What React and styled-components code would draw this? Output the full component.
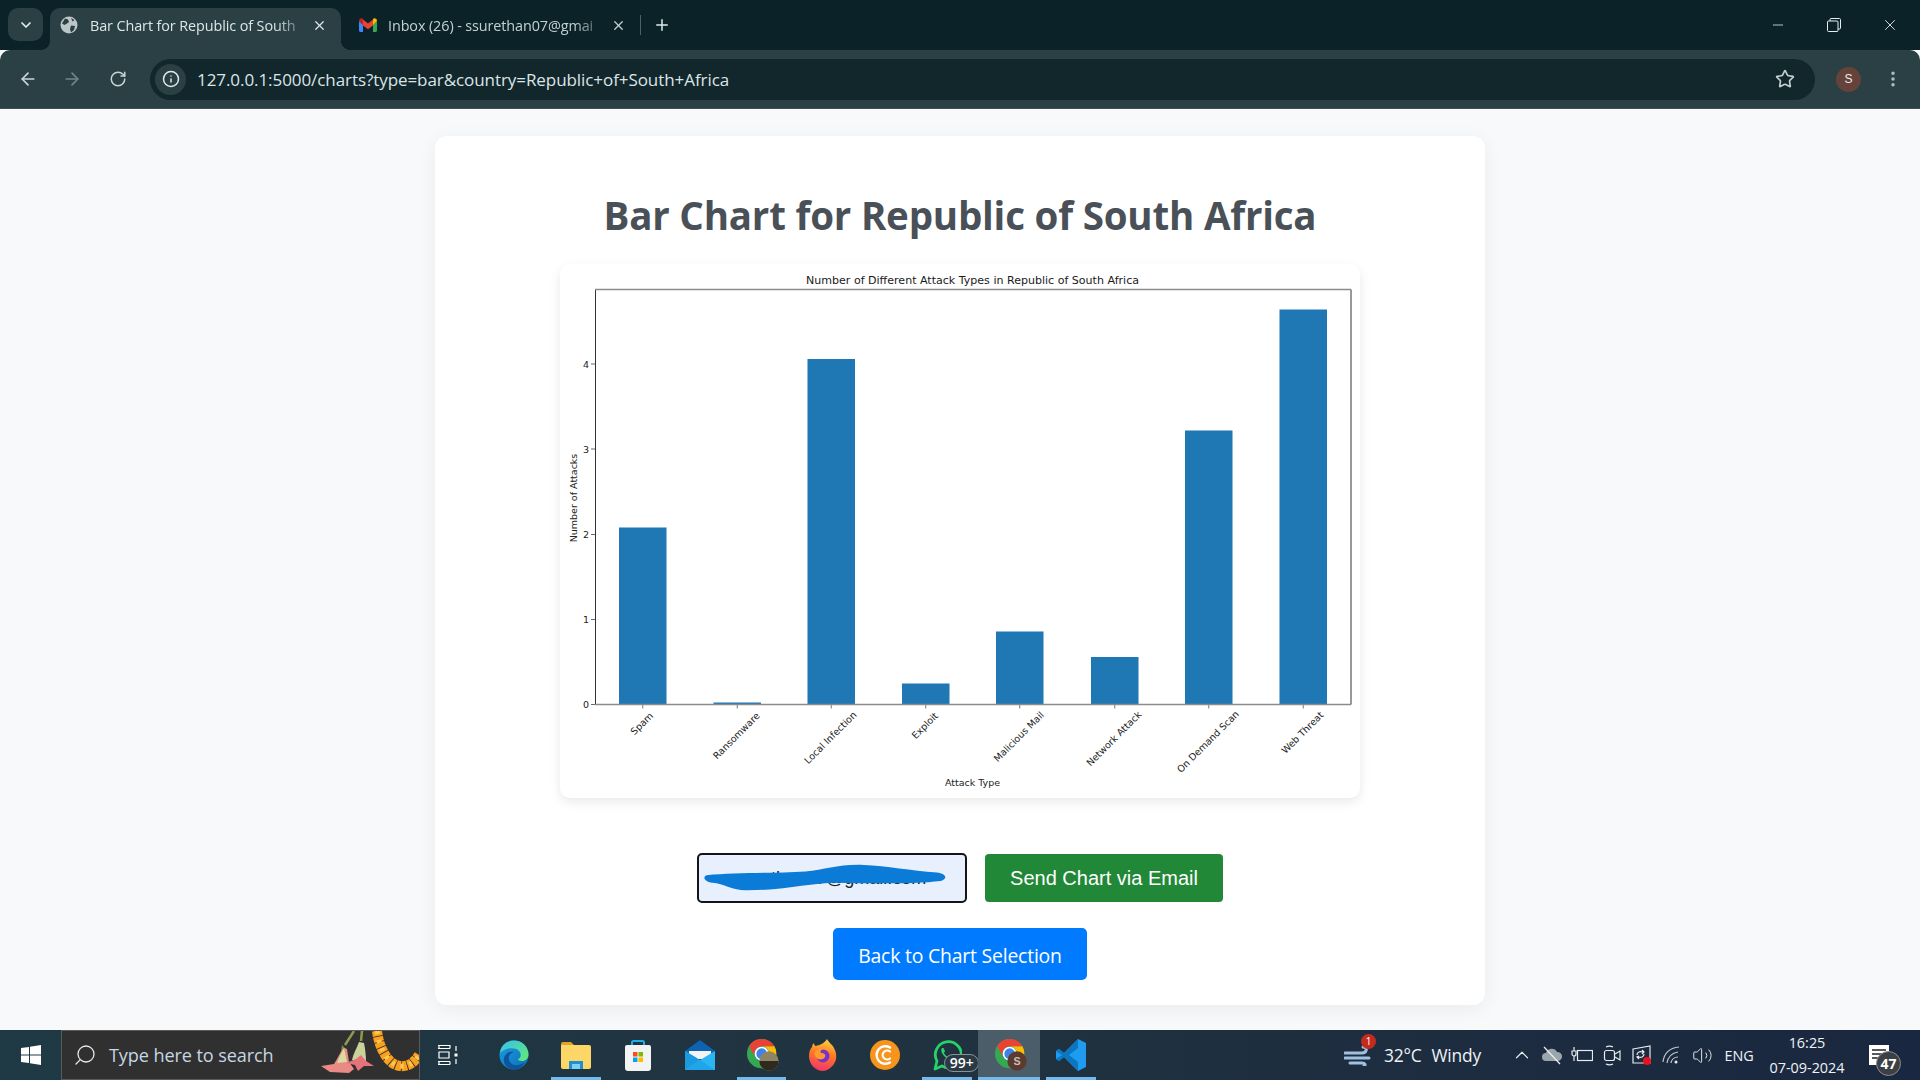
import React from "react";
import styled, { createGlobalStyle } from "styled-components";
import { ArrowLeft, ArrowRight, RotateCw, Info, Star, EllipsisVertical, ChevronDown, ChevronUp, X, Plus, Minus, Search, Volume2 } from "lucide-react";

const Global = createGlobalStyle`
  html, body { margin: 0; padding: 0; height: 100%; overflow: hidden; background: #f8f9fa; }
  * { box-sizing: border-box; }
  #root { height: 100%; }
`;
const UI = `"Open Sans", "Noto Sans", sans-serif`;

const Shell = styled.div`
  width: 1920px; height: 1080px; display: flex; flex-direction: column; font-family: ${UI};
`;
const TabStrip = styled.div`
  height: 50px; background: #0b2328; display: flex; align-items: flex-end; padding-left: 8px; flex-shrink: 0;
`;
const TabMenu = styled.div`
  width: 35px; height: 33px; margin-bottom: 9px; border-radius: 10px; background: #2a4044; color: #e6eeee;
  display: flex; align-items: center; justify-content: center;
`;
const Tab = styled.div`
  position: relative; width: ${p => p.$w}px; height: 42px; margin-left: ${p => p.$ml || 0}px; display: flex; align-items: center;
  padding: 0 10px 8px ${p => p.$pl}px; border-radius: 10px 10px 0 0;
  background: ${p => (p.$active ? "#2a4044" : "transparent")};
  color: ${p => (p.$active ? "#dde6e7" : "#c3d0d2")};
  ${p => p.$active && `
    &::before, &::after { content: ""; position: absolute; bottom: 0; width: 10px; height: 10px; }
    &::before { left: -10px; background: radial-gradient(circle at 0 0, transparent 10px, #2a4044 10.5px); }
    &::after { right: -10px; background: radial-gradient(circle at 100% 0, transparent 10px, #2a4044 10.5px); }
  `}
`;
const TabTitle = styled.span`
  flex: 1; margin-left: ${p => p.$ml}px; white-space: nowrap; font-size: 14.4px; letter-spacing: -0.1px;
  -webkit-mask-image: linear-gradient(90deg, #000 84%, rgba(0,0,0,.2) 97%);
  mask-image: linear-gradient(90deg, #000 84%, rgba(0,0,0,.2) 97%);
`;
const TabClose = styled.span`
  display: flex; width: 18px; justify-content: center; flex-shrink: 0; margin-right: ${p => p.$mr || 0}px;
`;
const TabSep = styled.div`width: 1px; height: 20px; background: #4b6266; margin: 0 0 15px 0;`;
const NewTab = styled.div`color: #dfe8e8; display: flex; margin: 0 0 16px 12px;`;
const WindowControls = styled.div`margin-left: auto; height: 100%; display: flex; align-items: center; padding-right: 2px; color: #e8eeee;`;
const WinBtn = styled.div`width: 56px; display: flex; justify-content: center;`;

const Toolbar = styled.div`
  height: 59px; background: #2a4044; display: flex; align-items: center; padding-left: 6px; flex-shrink: 0;
  border-radius: 10px 10px 0 0; border-bottom: 1px solid #3c4f52;
`;
const NavBtn = styled.div`
  width: ${p => p.$w || 44}px; margin-left: ${p => p.$ml || 0}px; display: flex; justify-content: center;
  color: ${p => (p.$dim ? "#70868a" : "#c7d5d7")};
`;
const Omnibox = styled.div`
  width: 1665px; height: 41px; margin-left: 10px; border-radius: 21px; background: #12272c;
  display: flex; align-items: center; padding: 0 20px 0 5px;
`;
const InfoPill = styled.div`
  width: 31px; height: 31px; border-radius: 50%; background: #2a4044; color: #e2eaeb;
  display: flex; align-items: center; justify-content: center;
`;
const Url = styled.div`
  margin-left: 11px; font-size: 17px; letter-spacing: -0.07px; color: #dbe5e6; flex: 1; white-space: nowrap;
`;
const Avatar = styled.div`
  width: 25px; height: 25px; margin-left: 21px; border-radius: 50%; background: #65433a; color: #efe6e2;
  font: 12px "Liberation Sans", sans-serif; display: flex; align-items: center; justify-content: center;
`;
const MenuBtn = styled.div`margin-left: 22px; color: #a9c0c3; display: flex;`;

const Main = styled.main`
  flex: 1; display: flex; justify-content: center; padding-top: 27px; background: #f8f9fa; min-height: 0;
`;
const Card = styled.section`
  width: 1050px; height: 869px; background: #fff; border-radius: 12px; box-shadow: 0 4px 20px rgba(0,0,0,.06);
  display: flex; flex-direction: column; align-items: center; padding: 43px 0 25px;
`;
const Title = styled.h1`
  margin: 0; height: 86px; font: 700 38.5px/72px "Open Sans", sans-serif; letter-spacing: -0.2px; color: #495057; white-space: nowrap;
`;
const ChartCard = styled.div`
  width: 800px; height: 534px; border-radius: 10px; background: #fff; box-shadow: 0 4px 12px rgba(0,0,0,.09); overflow: hidden; flex-shrink: 0;
`;
const ChartSvg = styled.svg`display: block; font-family: "DejaVu Sans", sans-serif;`;
const EmailRow = styled.form`display: flex; gap: 18px; margin-top: 55px; align-items: center;`;
const EmailBox = styled.div`
  position: relative; width: 270px; height: 50px; border: 2px solid #14141c; border-radius: 5px; background: #e8f0fe;
  display: flex; align-items: center; padding-left: 28px; font: 18px "Liberation Sans", sans-serif; color: #222; overflow: hidden;
`;
const Scribble = styled.svg`position: absolute; left: 2px; top: 5px;`;
const SendBtn = styled.button`
  width: 238px; height: 48px; border: 0; border-radius: 4px; background: #218838; color: #fff;
  font: 20px "Liberation Sans", sans-serif;
`;
const BackBtn = styled.a`
  width: 254px; height: 52px; margin-top: 25px; padding-top: 2px; border-radius: 5px; background: #007bff; color: #fff;
  font: 19.4px "Open Sans", sans-serif; letter-spacing: -0.2px; display: flex; align-items: center; justify-content: center; flex-shrink: 0;
`;

const Taskbar = styled.footer`
  height: 50px; flex-shrink: 0; display: flex; align-items: stretch; color: #eef3f5;
  background: linear-gradient(90deg, #1f3a45, #20323f 50%, #1a2740);
`;
const Start = styled.div`width: 61px; display: flex; align-items: center; justify-content: center;`;
const SearchBox = styled.div`
  width: 359px; background: #303030; border: 1px solid #5a5a5a; display: flex; align-items: center; padding-left: 11px;
  color: #c6d6e2; position: relative; overflow: hidden;
`;
const SearchText = styled.span`margin-left: 12px; font-size: 18.1px; letter-spacing: -0.1px;`;
const Garland = styled.svg`position: absolute; right: 0; top: 0;`;
const Slot = styled.div`
  position: relative; width: ${p => p.$w || 61.9}px; padding-right: ${p => p.$pr || 0}px; display: flex; align-items: center; justify-content: center; flex-shrink: 0;
  background: ${p => (p.$active ? "#4b5d69" : "transparent")};
  ${p => p.$open && `
    &::after { content: ""; position: absolute; bottom: 0; height: 3px; left: ${p.$active ? 0 : 6}px; right: ${p.$active ? 0 : 6}px; background: #76b9ed; }
  `}
`;
const ChromeWrap = styled.div`display: flex; margin-left: 3px;`;
const Tray = styled.div`margin-left: auto; width: 580px; display: flex; align-items: center;`;
const WeatherGroup = styled.div`width: 167px; display: flex; align-items: center; padding-left: 4px; font-size: 17.4px; letter-spacing: -0.2px;`;
const WeatherIconWrap = styled.div`position: relative; width: 40px; display: flex;`;
const AlertDot = styled.span`
  position: absolute; left: 17px; top: -10px; width: 15px; height: 15px; border-radius: 50%; background: #c42b1c; font-size: 10px; line-height: 15px; text-align: center; color: #fff;
`;
const WindyLabel = styled.span`margin-left: 10px;`;
const TrayIcon = styled.div`width: 30px; display: flex; justify-content: center; color: #e6ecef;`;
const Lang = styled.div`width: 44px; font-size: 14.4px; letter-spacing: -0.1px; text-align: center;`;
const Clock = styled.div`width: 92px; text-align: center; font-size: 14.4px; line-height: 25px;`;
const Notify = styled.div`position: relative; margin-left: 16px; display: flex;`;
const NotifyBadge = styled.span`
  position: absolute; left: 7px; top: 6px; width: 25px; height: 25px; border-radius: 50%; background: #3c3f44; border: 1px solid #8a8d90;
  font-size: 14px; font-weight: 700; line-height: 23px; text-align: center; color: #fff;
`;
const CountBadge = styled.span`
  position: absolute; left: 28px; top: 24px; width: 35px; height: 18px; border-radius: 9px; background: #2a3a45; border: 1px solid #8a9299;
  font-size: 14px; font-weight: 600; line-height: 15px; text-align: center; color: #fff;
`;

/* ---- drawings ---- */
const GlobeFav = () => (
  <svg width="18" height="18" viewBox="0 0 18 18">
    <circle cx="9" cy="9" r="8.5" fill="#bcc6c8" />
    <path d="M5 2.5l3 1 1 2.5-2 1.5L4.5 9 2 7.5zM11 9.5l4 .5-1 4-3 2.5-1-3.5zM11 2l3.5 2-2 1.5z" fill="#2a4044" />
  </svg>
);
const GmailFav = () => (
  <svg width="18" height="14" viewBox="0 0 18 14">
    <path d="M0 3v9.6C0 13.4.6 14 1.4 14H4V6.5z" fill="#4285F4" />
    <path d="M18 3v9.6c0 .8-.6 1.4-1.4 1.4H14V6.5z" fill="#34A853" />
    <path d="M4 7.5V1.5L9 5.4 14 1.5v6L9 11.2z" fill="#EA4335" />
    <path d="M0 3c0-2.3 2.6-3.6 4-2v6z" fill="#C5221F" />
    <path d="M14 1c1.4-1.6 4-.3 4 2l-4 4z" fill="#FBBC04" />
  </svg>
);
const RestoreIcon = () => (
  <svg width="14" height="14" viewBox="0 0 14 14" fill="none" stroke="currentColor" strokeWidth="1">
    <rect x="0.5" y="3" width="10.5" height="10.5" rx="1" />
    <path d="M3 3V1.5C3 1 3.4.5 4 .5h8.5c.5 0 1 .5 1 1V10c0 .6-.5 1-1 1H11" />
  </svg>
);
const WinLogo = () => (
  <svg width="20" height="20" viewBox="0 0 20 20" fill="#fff">
    <path d="M0 3l8-1.1V9.4H0zM9 1.7L20 0v9.4H9zM0 10.4h8v7.7L0 17zM9 10.4h11V20L9 18.3z" />
  </svg>
);
const TaskView = () => (
  <svg width="20" height="20" viewBox="0 0 20 20" fill="none" stroke="#fff" strokeWidth="1.2">
    <path d="M0 .5h12v3M0 3.5h12M1 7h10v6H1zM0 16.5h12M0 19.5h12M12 16.500v3M1 .5v3M1 16.500v3" />
    <path d="M18 1v5M18 14v5" />
    <rect x="16.500" y="8.500" width="3" height="3" fill="#fff" stroke="none" />
  </svg>
);
const Edge = () => (
  <svg width="30" height="30" viewBox="0 0 30 30">
    <defs>
      <linearGradient id="e1" x1="0" y1="1" x2="1" y2="0"><stop offset="0" stopColor="#0c59a4" /><stop offset="1" stopColor="#114a8b" /></linearGradient>
      <linearGradient id="e2" x1="0" y1="0" x2="1" y2="1"><stop offset="0" stopColor="#1b9de2" /><stop offset="1" stopColor="#0d6fb8" /></linearGradient>
      <linearGradient id="e3" x1="0" y1="0" x2="1" y2="1"><stop offset="0" stopColor="#35c1f1" /><stop offset="1" stopColor="#66eb6e" /></linearGradient>
    </defs>
    <circle cx="15" cy="15" r="14.500" fill="url(#e2)" />
    <path d="M1 13C2 5 8 .5 15 .5c8 0 14.500 6 14.500 14 0 4-3 6.500-6.500 6.500-2.500 0-4-1-4-2 3-1 3.500-5 1.500-7.500C17 7 7 7 1 13z" fill="url(#e3)" />
    <path d="M12 29c-5-1.500-8-6-7-11 1-4 5-7 10-6-4 1-6 4-5 8 1 3 4 6 9 5 3-.5 5-1.500 7-3-3 6-8 8.500-14 7z" fill="url(#e1)" />
  </svg>
);
const Folder = () => (
  <svg width="30" height="27" viewBox="0 0 30 27">
    <path d="M0 2a2 2 0 0 1 2-2h8l3 3H0z" fill="#e0a42a" />
    <path d="M0 3h28a2 2 0 0 1 2 2v20a2 2 0 0 1-2 2H2a2 2 0 0 1-2-2z" fill="#fcd768" />
    <path d="M8 19v8h3v-5h8v5h3v-8z" fill="#1f8fd8" />
    <rect x="11" y="22" width="8" height="5" fill="#7ed0f5" />
  </svg>
);
const Store = () => (
  <svg width="26" height="31" viewBox="0 0 26 31">
    <path d="M7 6V2.500C7 1.500 7.500 1 8.500 1h9c1 0 1.500.5 1.500 1.500V6" fill="none" stroke="#1db0e6" strokeWidth="2" />
    <path d="M0 7a2 2 0 0 1 2-2h22a2 2 0 0 1 2 2v21a3 3 0 0 1-3 3H3a3 3 0 0 1-3-3z" fill="#f3f3f3" />
    <rect x="8" y="12" width="4.500" height="4.500" fill="#f25022" />
    <rect x="13.500" y="12" width="4.500" height="4.500" fill="#7fba00" />
    <rect x="8" y="17.500" width="4.500" height="4.500" fill="#00a4ef" />
    <rect x="13.500" y="17.500" width="4.500" height="4.500" fill="#ffb900" />
  </svg>
);
const Mail = () => (
  <svg width="30" height="30" viewBox="0 0 30 30">
    <path d="M0 11L15 0l15 11v3H0z" fill="#0f62b0" />
    <path d="M4 11h22v8H4z" fill="#f2f4f6" />
    <path d="M0 11l15 9 15-9v19H0z" fill="#29b6f2" />
    <path d="M0 30V11l15 9z" fill="#1c9ae0" />
    <path d="M0 30l15-10 15 10z" fill="#20a6e8" />
  </svg>
);
const Chrome = ({ children }) => (
  <ChromeWrap>
    <svg width="32" height="32" viewBox="0 0 48 48">
      <circle cx="22" cy="22" r="22" fill="#34A853" />
      <path d="M41.050 11A22 22 0 0 1 22 44l9.500-16.500A11 11 0 0 0 22 11z" fill="#FBBC04" />
      <path d="M22 0a22 22 0 0 1 19.050 11H22a11 11 0 0 0-9.500 16.500L3 11A22 22 0 0 1 22 0z" fill="#EA4335" />
      <circle cx="22" cy="22" r="10.500" fill="#fff" />
      <circle cx="22" cy="22" r="8" fill="#3f83ea" />
      {children}
    </svg>
  </ChromeWrap>
);
const Firefox = () => (
  <svg width="28" height="32" viewBox="0 0 28 32">
    <defs>
      <linearGradient id="ff" x1="0.6" y1="0" x2="0.4" y2="1"><stop offset="0" stopColor="#ffd23c" /><stop offset=".45" stopColor="#ff7a24" /><stop offset="1" stopColor="#f0356a" /></linearGradient>
    </defs>
    <path d="M18 0c1 3 5 5 7 9 3 6 3 11 0 16-3 4-7 7-11 7-8 0-14-7-14-15 0-4 1-7 3-9 0-2 1-3 2-4 0 2 1 3 2 3 3-1 8-2 11-7z" fill="url(#ff)" />
    <circle cx="14" cy="17" r="6.500" fill="#7a30c9" />
    <path d="M6 13c2-4 8-4 10-3-4 0-5 2-4 4 3 0 5 1 4 4-1 2-4 3-7 2-3-2-4-4-3-7z" fill="#ff9a2e" />
  </svg>
);
const CCleaner = () => (
  <svg width="30" height="30" viewBox="0 0 30 30">
    <circle cx="15" cy="15" r="15" fill="#f7941d" />
    <path d="M20 7.500a8.800 8.800 0 1 0 0 15" fill="none" stroke="#fff" strokeWidth="2.400" strokeLinecap="round" />
    <path d="M20 11.500a4.500 4.500 0 1 0 0 7" fill="none" stroke="#fff" strokeWidth="2.200" strokeLinecap="round" />
  </svg>
);
const WhatsApp = () => (
  <svg width="30" height="32" viewBox="0 0 30 32" fill="none">
    <path d="M3 30l2-8a13 13 0 1 1 5 5z" stroke="#25d366" strokeWidth="2.800" strokeLinejoin="round" />
    <path d="M10 9c-1 1-1 3 0 5 1.500 3 4 5 6 6 2 .7 4 0 4-2l-3-2-1.500 1.500c-1.500-.5-3-2.200-3.500-3.500L13 12l-1.500-3z" fill="#25d366" />
  </svg>
);
const VSCode = () => (
  <svg width="30" height="32" viewBox="0 0 30 32">
    <path d="M22 0l8 4v24l-8 4L8 18l-5 4-3-2v-8l3-2 5 4z" fill="#1f9cf0" />
    <path d="M22 0L8 14l-5-4-3 2 6 4-6 4 3 2 5-4 14 14V23l-9-7 9-7z" fill="#0b77c2" />
  </svg>
);
const TrayGlyph = ({ children, w = 22, h = 22 }) => (
  <svg width={w} height={h} viewBox={`0 0 ${w} ${h}`} fill="none" stroke="currentColor" strokeWidth="1.200">{children}</svg>
);

const bars = [
  { x: 619, top: 528, label: "Spam", cy: 724 },
  { x: 713.5, top: 703, label: "Ransomware", cy: 736 },
  { x: 807.5, top: 359.500, label: "Local Infection", cy: 738 },
  { x: 902, top: 684, label: "Exploit", cy: 726 },
  { x: 996, top: 632, label: "Malicious Mail", cy: 737 },
  { x: 1091, top: 657.5, label: "Network Attack", cy: 739 },
  { x: 1185, top: 431, label: "On Demand Scan", cy: 742 },
  { x: 1279.5, top: 310, label: "Web Threat", cy: 733 },
];
const yTicks = [[0, 705], [1, 620], [2, 535], [3, 449.500], [4, 364.500]];

const Chart = () => (
  <ChartSvg width="800" height="534" viewBox="560 264.500 800 534">
    <text x="972.500" y="284" fontSize="11.050" textAnchor="middle" fill="#1a1a1a">Number of Different Attack Types in Republic of South Africa</text>
    {bars.map(b => (
      <g key={b.label}>
        <rect x={b.x} y={b.top} width="47.500" height={705 - b.top} fill="#1f77b4" />
        <line x1={b.x + 23.75} x2={b.x + 23.75} y1="705" y2="709" stroke="#555" strokeWidth=".8" />
        <text x={b.x + 22.75} y={b.cy} fontSize="9.500" textAnchor="middle" dominantBaseline="central" fill="#222" transform={`rotate(-45 ${b.x + 22.75} ${b.cy})`}>{b.label}</text>
      </g>
    ))}
    <path d="M595.500 290V705M1351 290V705" fill="none" stroke="#333" strokeWidth="1" />
    <path d="M595 290H1351M595 705H1351" fill="none" stroke="#8c8c8c" strokeWidth="1.400" />
    {yTicks.map(([v, y]) => (
      <g key={v}>
        <line x1="591" x2="595" y1={y} y2={y} stroke="#444" strokeWidth=".8" />
        <text x="589" y={y} fontSize="9.500" textAnchor="end" dominantBaseline="central" fill="#222">{v}</text>
      </g>
    ))}
    <text x="0" y="0" fontSize="9.500" textAnchor="middle" dominantBaseline="central" fill="#222" transform="translate(573 498.500) rotate(-90)">Number of Attacks</text>
    <text x="972.500" y="786" fontSize="9.500" textAnchor="middle" fill="#222">Attack Type</text>
  </ChartSvg>
);

export default function App() {
  return (
    <Shell>
      <Global />
      <TabStrip>
        <TabMenu><ChevronDown size={16} strokeWidth={2.5} /></TabMenu>
        <Tab $active $w={291} $pl={10} $ml={7}>
          <GlobeFav />
          <TabTitle $ml={12}>Bar Chart for Republic of South</TabTitle>
          <TabClose $mr={3}><X size={15} strokeWidth={2} /></TabClose>
        </Tab>
        <Tab $w={299} $pl={18}>
          <GmailFav />
          <TabTitle $ml={11}>Inbox (26) - ssurethan07@gmai</TabTitle>
          <TabClose $mr={3}><X size={15} strokeWidth={2} /></TabClose>
        </Tab>
        <TabSep />
        <NewTab><Plus size={18} strokeWidth={2} /></NewTab>
        <WindowControls>
          <WinBtn><Minus size={16} strokeWidth={1.2} /></WinBtn>
          <WinBtn><RestoreIcon /></WinBtn>
          <WinBtn><X size={18} strokeWidth={1.2} /></WinBtn>
        </WindowControls>
      </TabStrip>
      <Toolbar>
        <NavBtn><ArrowLeft size={20} strokeWidth={2} /></NavBtn>
        <NavBtn $dim><ArrowRight size={20} strokeWidth={2} /></NavBtn>
        <NavBtn $ml={2}><RotateCw size={18} strokeWidth={2} /></NavBtn>
        <Omnibox>
          <InfoPill><Info size={18} strokeWidth={2} /></InfoPill>
          <Url>127.0.0.1:5000/charts?type=bar&amp;country=Republic+of+South+Africa</Url>
          <Star size={20} strokeWidth={2} color="#c0cfd1" />
        </Omnibox>
        <Avatar>S</Avatar>
        <MenuBtn><EllipsisVertical size={20} strokeWidth={2.2} /></MenuBtn>
      </Toolbar>
      <Main>
        <Card>
          <Title>Bar Chart for Republic of South Africa</Title>
          <ChartCard><Chart /></ChartCard>
          <EmailRow onSubmit={e => e.preventDefault()}>
            <EmailBox>
              ssurethan07@gmail.com
              <Scribble width="250" height="38" viewBox="0 0 266 38">
                <path d="M6 15c30-3 70-2 105-4 22-2 35-8 62-7 25 1 50 6 78 8 10 1 12 7 4 9-25 3-70 3-110 2-30 0-55 8-95 8-15 1-25-7-38-8-8-1-11-6-6-8z" fill="#0a7bd6" />
              </Scribble>
            </EmailBox>
            <SendBtn type="button">Send Chart via Email</SendBtn>
          </EmailRow>
          <BackBtn>Back to Chart Selection</BackBtn>
        </Card>
      </Main>
      <Taskbar>
        <Start><WinLogo /></Start>
        <SearchBox>
          <Search size={24} strokeWidth={1.3} style={{ transform: "scaleX(-1)" }} color="#e8e8e8" />
          <SearchText>Type here to search</SearchText>
          <Garland width="110" height="48" viewBox="0 0 110 48">
            <path d="M68 0C69 8 71 15 75 22c4 7 9 12 16 13 8 1 14-3 19-11" fill="none" stroke="#f9a01f" strokeWidth="10" strokeDasharray="5 .8" />
            <path d="M68 0C69 8 71 15 75 22c4 7 9 12 16 13 8 1 14-3 19-11" fill="none" stroke="#ffc84a" strokeWidth="5" strokeDasharray="3 6" />
            <path d="M45 0L36 14M53 0l-1 10" stroke="#8d9a4e" strokeWidth="2.500" fill="none" />
            <path d="M33 14l4 4-5 3z" fill="#7e8c40" />
            <path d="M35 17c-4 4-6 10-10 16L12 35l9 6 19 1 5-4-5-7-2-13z" fill="#e98a86" />
            <path d="M35 17c-3 5-5 10-7 15l10-1z" fill="#d8dca0" />
            <path d="M50 11c-2 6-6 12-7 18l14 2c0-7-1-14-2-19z" fill="#c9d29a" />
            <path d="M37 32l10-4 5-4 5 6 8 5-10 0-6 5-3-6z" fill="#e5737a" />
          </Garland>
        </SearchBox>
        <Slot $w={63} $pr={8}><TaskView /></Slot>
        <Slot><Edge /></Slot>
        <Slot $open><Folder /></Slot>
        <Slot><Store /></Slot>
        <Slot><Mail /></Slot>
        <Slot $open>
          <Chrome>
            <circle cx="33" cy="33" r="14.500" fill="#8f8464" />
            <path d="M18.500 33h29a14.500 14.500 0 0 1-29 0z" fill="#2f2a1e" />
          </Chrome>
        </Slot>
        <Slot><Firefox /></Slot>
        <Slot><CCleaner /></Slot>
        <Slot $open><WhatsApp /><CountBadge>99+</CountBadge></Slot>
        <Slot $open $active>
          <Chrome>
            <circle cx="33" cy="33" r="14.500" fill="#5b3a30" />
            <text x="33" y="39" fontSize="16" fontFamily="Liberation Sans" fontWeight="700" fill="#cdbdb7" textAnchor="middle">S</text>
          </Chrome>
        </Slot>
        <Slot $open><VSCode /></Slot>
        <Tray>
          <WeatherGroup>
            <WeatherIconWrap>
              <svg width="28" height="22" viewBox="0 0 28 22" fill="none" stroke="#9fc0e0" strokeWidth="3" strokeLinecap="round">
                <path d="M1 9h17c5 0 6-6 1-6M1 14h24M6 19h12c3 0 4 2 2 3" />
              </svg>
              <AlertDot>1</AlertDot>
            </WeatherIconWrap>
            <span>32°C</span>
            <WindyLabel>Windy</WindyLabel>
          </WeatherGroup>
          <TrayIcon><ChevronUp size={22} strokeWidth={1.3} /></TrayIcon>
          <TrayIcon>
            <TrayGlyph>
              <path d="M5 17a4 4 0 0 1 0-8 6 6 0 0 1 11-1 4.500 4.500 0 0 1 1 9z" fill="#9aa6ad" stroke="none" />
              <path d="M3 3l16 17" stroke="#eee" />
            </TrayGlyph>
          </TrayIcon>
          <TrayIcon>
            <TrayGlyph>
              <rect x="6.500" y="6.500" width="15" height="10" />
              <path d="M3 3v4M1 7h4v3c0 1-1 2-2 2s-2-1-2-2zM3 12v5" />
            </TrayGlyph>
          </TrayIcon>
          <TrayIcon>
            <TrayGlyph>
              <rect x="3.500" y="6.500" width="10" height="10" rx="2" />
              <path d="M14 10l5-3v9l-5-3M5 3c2-1 5-1 7 0M5 20c2 1 5 1 7 0" />
            </TrayGlyph>
          </TrayIcon>
          <TrayIcon>
            <TrayGlyph>
              <path d="M2 5l17-3v17H2zM6 11c0-3 3-4 6-3M13 10c0 3-3 4-6 3M11 6l2 2-2 2M8 12l-2 1 2 2" />
              <circle cx="16" cy="17" r="4" fill="#e81123" stroke="none" />
            </TrayGlyph>
          </TrayIcon>
          <TrayIcon>
            <TrayGlyph>
              <path d="M2 18C3 9 9 4 18 3M6 19c1-6 5-10 11-11M10 19c.5-3 3-6 7-6" opacity=".8" />
              <circle cx="15" cy="18" r="1.500" fill="currentColor" stroke="none" />
            </TrayGlyph>
          </TrayIcon>
          <TrayIcon><Volume2 size={21} strokeWidth={1.1} /></TrayIcon>
          <Lang>ENG</Lang>
          <Clock>16:25<br />07-09-2024</Clock>
          <Notify>
            <svg width="20" height="20" viewBox="0 0 20 20">
              <path d="M0 0h20v20H0z" fill="#fff" />
              <path d="M3 5h14M3 9h14M3 13h9" stroke="#222" strokeWidth="1.300" />
            </svg>
            <NotifyBadge>47</NotifyBadge>
          </Notify>
        </Tray>
      </Taskbar>
    </Shell>
  );
}
